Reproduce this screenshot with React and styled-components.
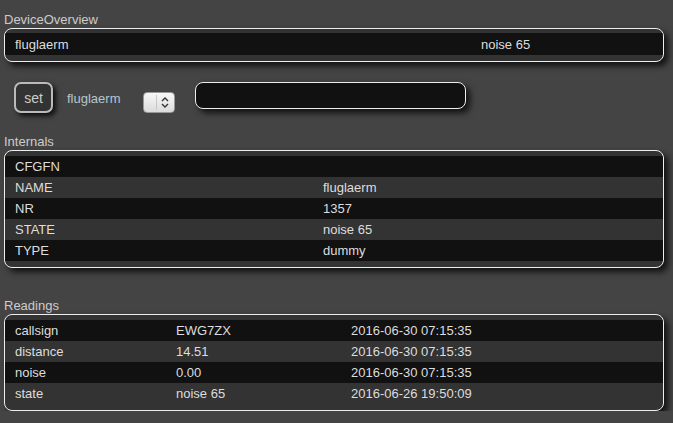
import React from "react";
import styled, { createGlobalStyle } from "styled-components";

const Global = createGlobalStyle`
  html, body { margin: 0; padding: 0; background: #444; }
  body {
    font-family: "Liberation Sans", Arial, sans-serif;
    font-size: 13px;
    color: #ccc;
  }
`;

const Page = styled.div`
  width: 660px;
  padding: 12px 0 0 4px;
  display: flex;
  flex-direction: column;
`;

const Section = styled.section`
  display: flex;
  flex-direction: column;
  margin-top: ${(p) => p.$top || 0}px;
`;

const Label = styled.div`
  height: 16px;
  line-height: 16px;
  color: #ccc;
`;

const Block = styled.div`
  border: 1px solid #eee;
  border-radius: 8px;
  background: #333;
  padding: ${(p) => p.$pt || 4}px 0 6px;
  box-shadow: 4px 4px 6px rgba(0, 0, 0, 0.75);
  overflow: hidden;
`;

const Row = styled.div`
  display: grid;
  grid-template-columns: ${(p) => p.$cols};
  height: ${(p) => p.$h || 21}px;
  align-items: center;
  background: ${(p) => (p.$odd ? "#111" : "#333")};
  color: #ddd;
`;

const Cell = styled.div`
  padding-left: 10px;
  white-space: nowrap;
`;

const SetRow = styled.div`
  display: flex;
  align-items: flex-start;
  margin-top: 20px;
  padding-left: 10px;
  height: 31px;
`;

const SetButton = styled.button`
  width: 39px;
  height: 31px;
  border: 2px solid #bbb;
  border-radius: 7px;
  background: #333;
  color: #ccc;
  font-family: "Liberation Sans", Arial, sans-serif;
  font-size: 14px;
  padding: 1px 0 0;
  box-shadow: 3px 3px 5px rgba(0, 0, 0, 0.8);
`;

const DevName = styled.span`
  margin: 9px 0 0 14px;
  line-height: 16px;
  color: #b9c4cc;
`;

const SelectBox = styled.div`
  margin: 10px 0 0 23px;
  width: 30px;
  height: 19px;
  border: 1px solid #999;
  border-radius: 4px;
  background: linear-gradient(#f8f8f8, #dcdcdc);
  display: flex;
  align-items: center;
  justify-content: flex-end;
  box-sizing: content-box;
`;

const Divider = styled.span`
  width: 1px;
  height: 15px;
  background: #c8c8c8;
  margin-right: 4px;
`;

const Chevron = styled.svg`
  width: 8px;
  height: 13px;
  margin-right: 5px;
`;

const TextInput = styled.input`
  margin-left: 20px;
  width: 271px;
  height: 27px;
  box-sizing: border-box;
  border: 1px solid #eee;
  border-radius: 8px;
  background: #111;
  color: #ddd;
  box-shadow: 4px 4px 6px rgba(0, 0, 0, 0.75);
  outline: none;
`;

const internals = [
  ["CFGFN", ""],
  ["NAME", "fluglaerm"],
  ["NR", "1357"],
  ["STATE", "noise 65"],
  ["TYPE", "dummy"],
];

const readings = [
  ["callsign", "EWG7ZX", "2016-06-30 07:15:35"],
  ["distance", "14.51", "2016-06-30 07:15:35"],
  ["noise", "0.00", "2016-06-30 07:15:35"],
  ["state", "noise 65", "2016-06-26 19:50:09"],
];

export default function App() {
  return (
    <>
      <Global />
      <Page>
        <Section>
          <Label>DeviceOverview</Label>
          <Block>
            <Row $cols="466px 1fr" $h={22} $odd>
              <Cell>fluglaerm</Cell>
              <Cell>noise 65</Cell>
            </Row>
          </Block>
        </Section>

        <SetRow>
          <SetButton>set</SetButton>
          <DevName>fluglaerm</DevName>
          <SelectBox>
            <Divider />
            <Chevron viewBox="0 0 8 13">
              <path d="M1 5 L4 2 L7 5 M1 8 L4 11 L7 8" fill="none" stroke="#333" strokeWidth="1.4" />
            </Chevron>
          </SelectBox>
          <TextInput type="text" />
        </SetRow>

        <Section $top={21}>
          <Label>Internals</Label>
          <Block $pt={5}>
            {internals.map((r, i) => (
              <Row key={r[0]} $cols="308px 1fr" $odd={i % 2 === 0}>
                <Cell>{r[0]}</Cell>
                <Cell>{r[1]}</Cell>
              </Row>
            ))}
          </Block>
        </Section>

        <Section $top={30}>
          <Label>Readings</Label>
          <Block $pt={5}>
            {readings.map((r, i) => (
              <Row key={r[0]} $cols="161px 175px 1fr" $odd={i % 2 === 0}>
                <Cell>{r[0]}</Cell>
                <Cell>{r[1]}</Cell>
                <Cell>{r[2]}</Cell>
              </Row>
            ))}
          </Block>
        </Section>
      </Page>
    </>
  );
}
